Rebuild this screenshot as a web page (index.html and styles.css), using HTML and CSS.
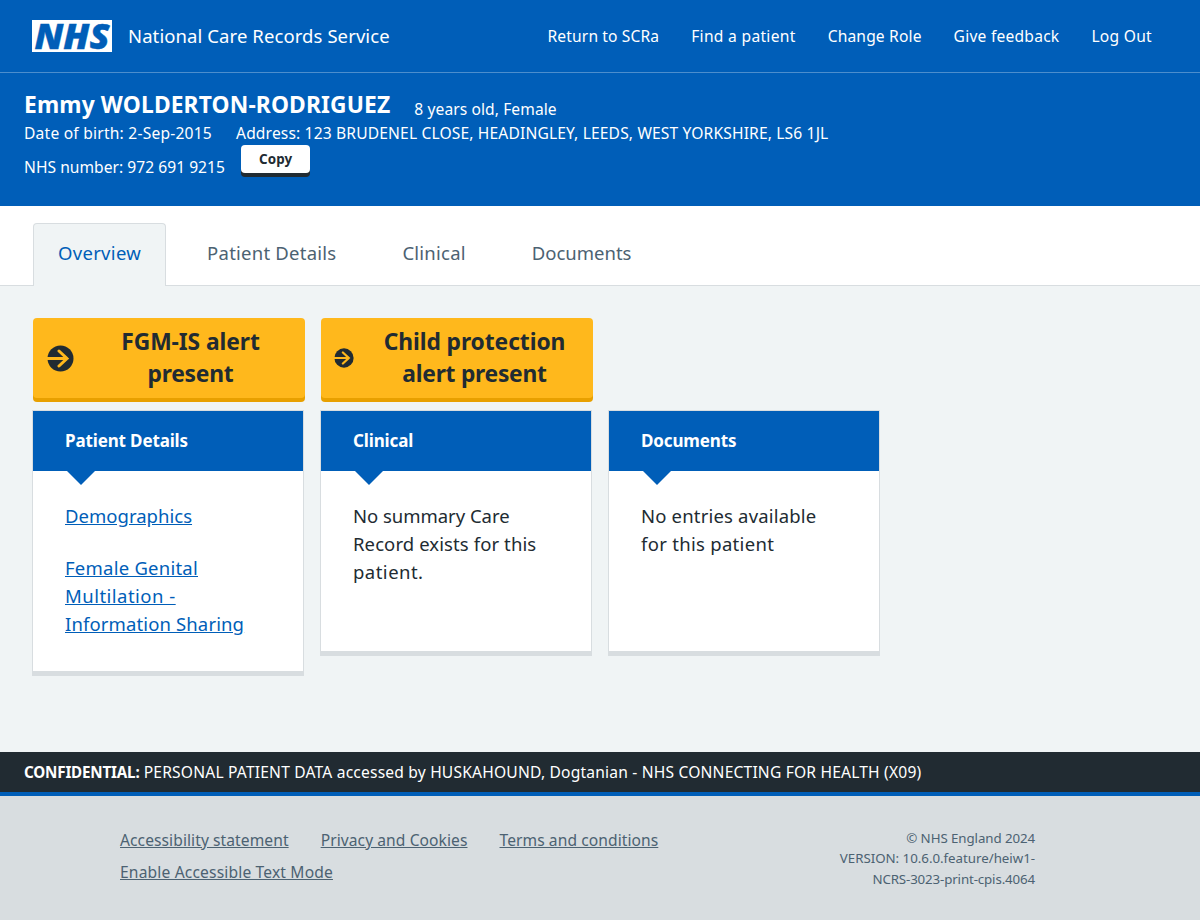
FILE: index.html
```html
<!DOCTYPE html>
<html lang="en">
<head>
<meta charset="utf-8">
<title>National Care Records Service</title>
<link rel="stylesheet" href="styles.css">
</head>
<body>
<header class="topbar">
  <a class="brand">
    <svg class="logo" viewBox="0 0 80 32" width="80" height="32" role="img" aria-label="NHS">
      <rect width="80" height="32" fill="#fff"/>
      <text class="logo-text" x="2.5" y="29.2" textLength="75" lengthAdjust="spacingAndGlyphs">NHS</text>
    </svg>
    <span class="service">National Care Records Service</span>
  </a>
  <nav class="nav">
    <a class="nav-return">Return to SCRa</a>
    <a class="nav-find">Find a patient</a>
    <a class="nav-role">Change Role</a>
    <a class="nav-feedback">Give feedback</a>
    <a class="nav-logout">Log Out</a>
  </nav>
</header>

<section class="banner">
  <div class="row row-name"><h1 class="name">Emmy WOLDERTON-RODRIGUEZ</h1><span class="age">8 years old, Female</span></div>
  <div class="row row-birth"><span class="dob">Date of birth: 2-Sep-2015</span><span class="address">Address: 123 BRUDENEL CLOSE, HEADINGLEY, LEEDS, WEST YORKSHIRE, LS6 1JL</span></div>
  <div class="row row-number"><span class="number">NHS number: 972 691 9215</span><button class="copy">Copy</button></div>
</section>

<nav class="tabs">
  <a class="tab tab-active">Overview</a>
  <a class="tab tab-details">Patient Details</a>
  <a class="tab tab-clinical">Clinical</a>
  <a class="tab tab-documents">Documents</a>
</nav>

<main class="main">
  <div class="alerts">
    <a class="alert">
      <svg class="arrow" width="27" height="27" viewBox="0 0 27 27"><circle cx="13.5" cy="13.5" r="13"/><path d="M0 13.5H20M12 6L20 13.5L12 21"/></svg>
      <span class="alert-text">FGM-IS alert<br><span class="snug">present</span></span>
    </a>
    <a class="alert alert-child">
      <svg class="arrow" width="20" height="20" viewBox="0 0 27 27"><circle cx="13.5" cy="13.5" r="13"/><path d="M0 13.5H20M12 6L20 13.5L12 21"/></svg>
      <span class="alert-text">Child protection<br><span class="snug">alert present</span></span>
    </a>
  </div>
  <div class="cards">
    <section class="card card-tall">
      <h2 class="card-head">Patient Details</h2>
      <div class="card-body">
        <p><a class="link link-demographics">Demographics</a></p>
        <p><a class="link">Female Genital<br><span class="loose">Multilation -</span><br><span class="tight">Information Sharing</span></a></p>
      </div>
    </section>
    <section class="card">
      <h2 class="card-head">Clinical</h2>
      <div class="card-body"><p class="summary"><span class="summary-first">No summary Care</span><br>Record exists for this<br><span class="loose">patient.</span></p></div>
    </section>
    <section class="card">
      <h2 class="card-head">Documents</h2>
      <div class="card-body"><p class="entries">No entries available<br><span class="entries-last">for this patient</span></p></div>
    </section>
  </div>
</main>

<div class="confidential"><b>CONFIDENTIAL:</b> PERSONAL PATIENT DATA accessed by HUSKAHOUND, Dogtanian - NHS CONNECTING FOR HEALTH (X09)</div>
<footer class="footer">
  <div class="footer-links">
    <a>Accessibility statement</a><a>Privacy and Cookies</a><a>Terms and conditions</a><a class="footer-mode">Enable Accessible Text Mode</a>
  </div>
  <div class="version"><span class="version-owner">© NHS England 2024</span><br>VERSION: 10.6.0.feature/heiw1-<br><span class="version-build">NCRS-3023-print-cpis.4064</span></div>
</footer>
</body>
</html>
```
FILE: styles.css
```css
* { box-sizing: border-box; }
body {
  margin: 0;
  height: 920px;
  display: flex;
  flex-direction: column;
  background: #f0f4f5;
  color: #212b32;
  font: 16px/24px "Noto Sans", "Open Sans", sans-serif;
}
h1, h2, p { margin: 0; }

.topbar {
  display: flex;
  justify-content: space-between;
  align-items: center;
  height: 73px;
  padding: 0 48px 0 32px;
  background: #005eb8;
  border-bottom: 1px solid #4c8ecd;
  color: #fff;
}
.brand { display: flex; align-items: center; gap: 16px; }
.logo { display: block; overflow: visible; }
.logo-text { font: italic 800 36px "Open Sans", "Noto Sans", sans-serif; fill: #005eb8; stroke: #005eb8; stroke-width: 0.4; }
.service { font-size: 18.5px; letter-spacing: 0.09px; white-space: nowrap; }
.nav { display: flex; gap: 32px; font-size: 15.6px; white-space: nowrap; }
.nav-return { letter-spacing: 0.13px; }
.nav-find { letter-spacing: 0.295px; }
.nav-role { letter-spacing: 0.156px; }
.nav-feedback { letter-spacing: 0.227px; }
.nav-logout { letter-spacing: 0.271px; }

.banner { height: 133px; padding: 16px 24px 0; background: #005eb8; color: #fff; font-size: 15.6px; }
.row { display: flex; align-items: flex-start; gap: 24px; white-space: nowrap; }
.row-name { height: 32px; }
.row-birth { height: 24px; }
.name { font-size: 22.8px; line-height: 31px; letter-spacing: 0.14px; }
.age { padding-top: 8px; letter-spacing: 0.09px; }
.dob { letter-spacing: 0.216px; }
.address { letter-spacing: 0.15px; }
.row-number { gap: 16px; }
.number { padding-top: 10px; letter-spacing: 0.03px; }
.copy {
  width: 69.5px; height: 28px; padding: 0;
  border: 0; border-radius: 4px; background: #fff; box-shadow: 0 4px 0 #212b32;
  color: #212b32; font: bold 13.4px/28px "Noto Sans", "Open Sans", sans-serif; letter-spacing: 0.15px;
}

.tabs { display: flex; align-items: flex-end; gap: 16px; height: 80px; padding-left: 33px; background: #fff; box-shadow: inset 0 -1px #d8dde0; }
.tab { height: 63px; padding: 0 24px; border: 1px solid transparent; border-bottom: 0; color: #4c6272; font-size: 18.5px; line-height: 58px; }
.tab-active { background: #f0f4f5; border-color: #d8dde0; border-radius: 4px 4px 0 0; color: #005eb8; letter-spacing: 0.3px; }
.tab-details { letter-spacing: 0.235px; }
.tab-clinical { letter-spacing: 0.23px; }

.main { flex: 1; padding: 32px 32px 0; }
.alerts { display: flex; gap: 16px; padding-left: 1px; }
.alert { display: flex; align-items: center; width: 272px; height: 80px; padding: 0 14px; border-radius: 4px; background: #ffb81c; box-shadow: 0 4px 0 #e8a000; }
.alert-child { padding: 0 14px 0 13px; }
.arrow { flex: none; }
.arrow circle { fill: #212b32; }
.arrow path { fill: none; stroke: #ffb81c; stroke-width: 3; stroke-linecap: round; }
.alert-text { flex: 1; margin-left: 16px; text-align: center; font-size: 22.8px; font-weight: bold; letter-spacing: -0.07px; line-height: 32px; white-space: nowrap; }
.snug { letter-spacing: -0.25px; }

.cards { display: flex; align-items: flex-start; gap: 16px; margin-top: 12px; }
.card { width: 272px; height: 246px; border: 1px solid #d8dde0; border-bottom-width: 5px; background: #fff; }
.card-tall { height: 266px; }
.card-head { position: relative; height: 60px; padding-left: 32px; background: #005eb8; color: #fff; font-size: 17px; letter-spacing: -0.14px; line-height: 59px; }
.card-head::after { content: ""; position: absolute; left: 34px; top: 60px; border: 14px solid transparent; border-top-color: #005eb8; border-bottom: 0; }
.card-body { padding: 31px 0 0 32px; font-size: 18.5px; line-height: 28px; white-space: nowrap; }
.card-body p + p { margin-top: 24px; }
.link { color: #005eb8; text-decoration: underline; letter-spacing: 0.238px; }
.link-demographics { letter-spacing: 0.02px; }
.loose { letter-spacing: 0.48px; }
.tight { letter-spacing: 0.13px; }
.summary { letter-spacing: 0.1px; }
.summary-first { letter-spacing: -0.03px; }
.entries { letter-spacing: 0.18px; }
.entries-last { letter-spacing: 0.3px; }

.confidential { height: 44px; padding-left: 24px; background: #212b32; border-bottom: 4px solid #005eb8; color: #fff; font-size: 15.6px; letter-spacing: 0.187px; line-height: 40px; white-space: nowrap; }
.confidential b { font-size: 15.2px; letter-spacing: -0.19px; }
.footer { display: flex; justify-content: space-between; height: 124px; padding: 28px 165px 0 120px; background: #d8dde0; color: #4c6272; font-size: 15.6px; }
.footer-links { display: flex; flex-wrap: wrap; align-content: flex-start; column-gap: 32px; width: 560px; line-height: 32px; letter-spacing: 0.075px; text-decoration: underline; }
.footer-mode { letter-spacing: 0.16px; }
.version { padding-top: 4px; text-align: right; font-size: 13.3px; letter-spacing: -0.02px; line-height: 20.4px; white-space: nowrap; }
.version-owner { letter-spacing: -0.08px; }
.version-build { letter-spacing: -0.13px; }
```
